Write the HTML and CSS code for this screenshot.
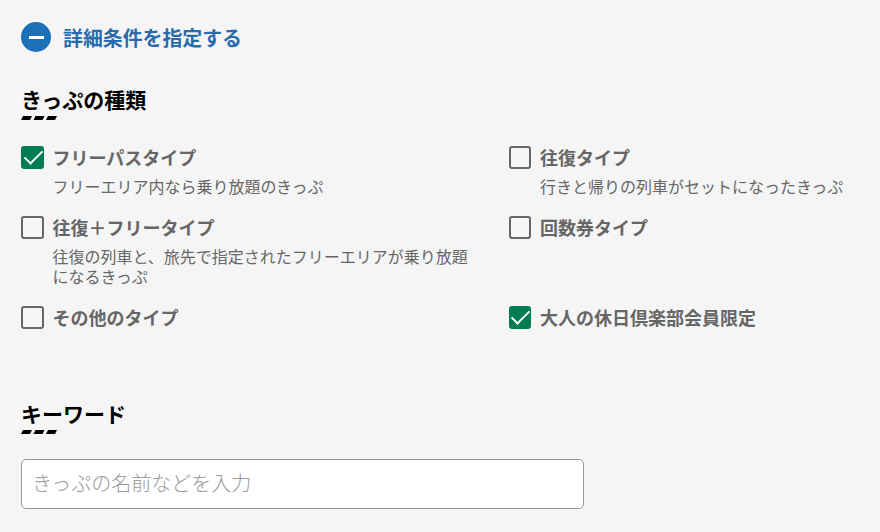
FILE: index.html
```html
<!DOCTYPE html>
<html lang="ja">
<head>
    <meta charset="UTF-8">
    <title>きっぷ検索</title>
    <link rel="stylesheet" href="styles.css">
</head>
<body>
<div class="search">
    <button type="button" class="toggle">
        <span class="toggle-icon"></span>
        <span class="toggle-text">詳細条件を指定する</span>
    </button>

    <h2 class="title">きっぷの種類<svg class="slash" viewBox="0 0 36 4"><path d="M2 0h9l-2 4H0zM14.500 0h9l-2 4h-9zM27 0h9l-2 4h-9z"/></svg></h2>
    <div class="types">
        <label class="type">
            <input type="checkbox" class="check" checked>
            <span class="name">フリーパスタイプ</span>
            <span class="note">フリーエリア内なら乗り放題のきっぷ</span>
        </label>
        <label class="type">
            <input type="checkbox" class="check">
            <span class="name">往復タイプ</span>
            <span class="note">行きと帰りの列車がセットになったきっぷ</span>
        </label>
        <label class="type">
            <input type="checkbox" class="check">
            <span class="name">往復＋フリータイプ</span>
            <span class="note">往復の列車と、旅先で指定されたフリーエリアが乗り放題になるきっぷ</span>
        </label>
        <label class="type">
            <input type="checkbox" class="check">
            <span class="name">回数券タイプ</span>
        </label>
        <label class="type">
            <input type="checkbox" class="check">
            <span class="name">その他のタイプ</span>
        </label>
        <label class="type">
            <input type="checkbox" class="check" checked>
            <span class="name">大人の休日倶楽部会員限定</span>
        </label>
    </div>

    <h2 class="title">キーワード<svg class="slash" viewBox="0 0 36 4"><path d="M2 0h9l-2 4H0zM14.500 0h9l-2 4h-9zM27 0h9l-2 4h-9z"/></svg></h2>
    <input type="text" class="keyword" placeholder="きっぷの名前などを入力">
</div>
</body>
</html>
```
FILE: styles.css
```css
* {
    box-sizing: border-box;
}

body {
    margin: 0;
    background: #f5f5f5;
    color: #000;
    font-family: "Noto Sans CJK JP", sans-serif;
}

.search {
    padding: 22px 21px 0;
}

.toggle {
    display: flex;
    align-items: center;
    gap: 12px;
    height: 30px;
    padding: 0;
    border: 0;
    background: none;
    color: #2a6bac;
    font-family: inherit;
    font-size: 19.9px;
    font-weight: bold;
    line-height: 30px;
    cursor: pointer;
}

.toggle-text {
    padding-top: 2px;
}

.toggle-icon {
    display: flex;
    align-items: center;
    justify-content: center;
    width: 30px;
    height: 30px;
    border-radius: 50%;
    background: #1b70b8;
}

.toggle-icon::before {
    content: "";
    width: 15px;
    height: 3px;
    background: #fff;
}

.title {
    margin: 32px 0 0;
    font-size: 21px;
    line-height: 30px;
}

.slash {
    display: block;
    width: 36px;
    height: 4px;
    margin-top: 2px;
}

.types {
    display: grid;
    grid-template-columns: 448px 1fr;
    gap: 19px 39.500px;
    height: 221px;
    align-content: start;
    margin-top: 25px;
}

.type {
    display: grid;
    grid-template-columns: 23px 1fr;
    column-gap: 8.500px;
    align-content: start;
}

.check {
    appearance: none;
    width: 23px;
    height: 23px;
    margin: 1px 0 0;
    border: 2px solid #666;
    border-radius: 3px;
}

.type:nth-child(even) .check {
    width: 22.500px;
}

.check:checked {
    border: 0;
    background: #007d50;
}

.check:checked::before {
    content: "";
    display: block;
    width: 17px;
    height: 8px;
    margin: 4px 0 0 2.500px;
    border: solid #fff;
    border-width: 0 0 2px 2px;
    transform: rotate(-45deg) scale(.94);
}

.name {
    color: #666;
    font-size: 18px;
    font-weight: bold;
    line-height: 24px;
}

.note {
    grid-column: 2;
    margin-top: 7px;
    color: #666;
    font-size: 16px;
    line-height: 20px;
}

.keyword {
    display: block;
    width: 563px;
    height: 50px;
    margin-top: 25px;
    padding: 0 10px 3px;
    border: 1px solid #999;
    border-radius: 5px;
    background: #fff;
    font-family: inherit;
    font-size: 20px;
    font-weight: 300;
}

.keyword::placeholder {
    color: #999;
}
```
